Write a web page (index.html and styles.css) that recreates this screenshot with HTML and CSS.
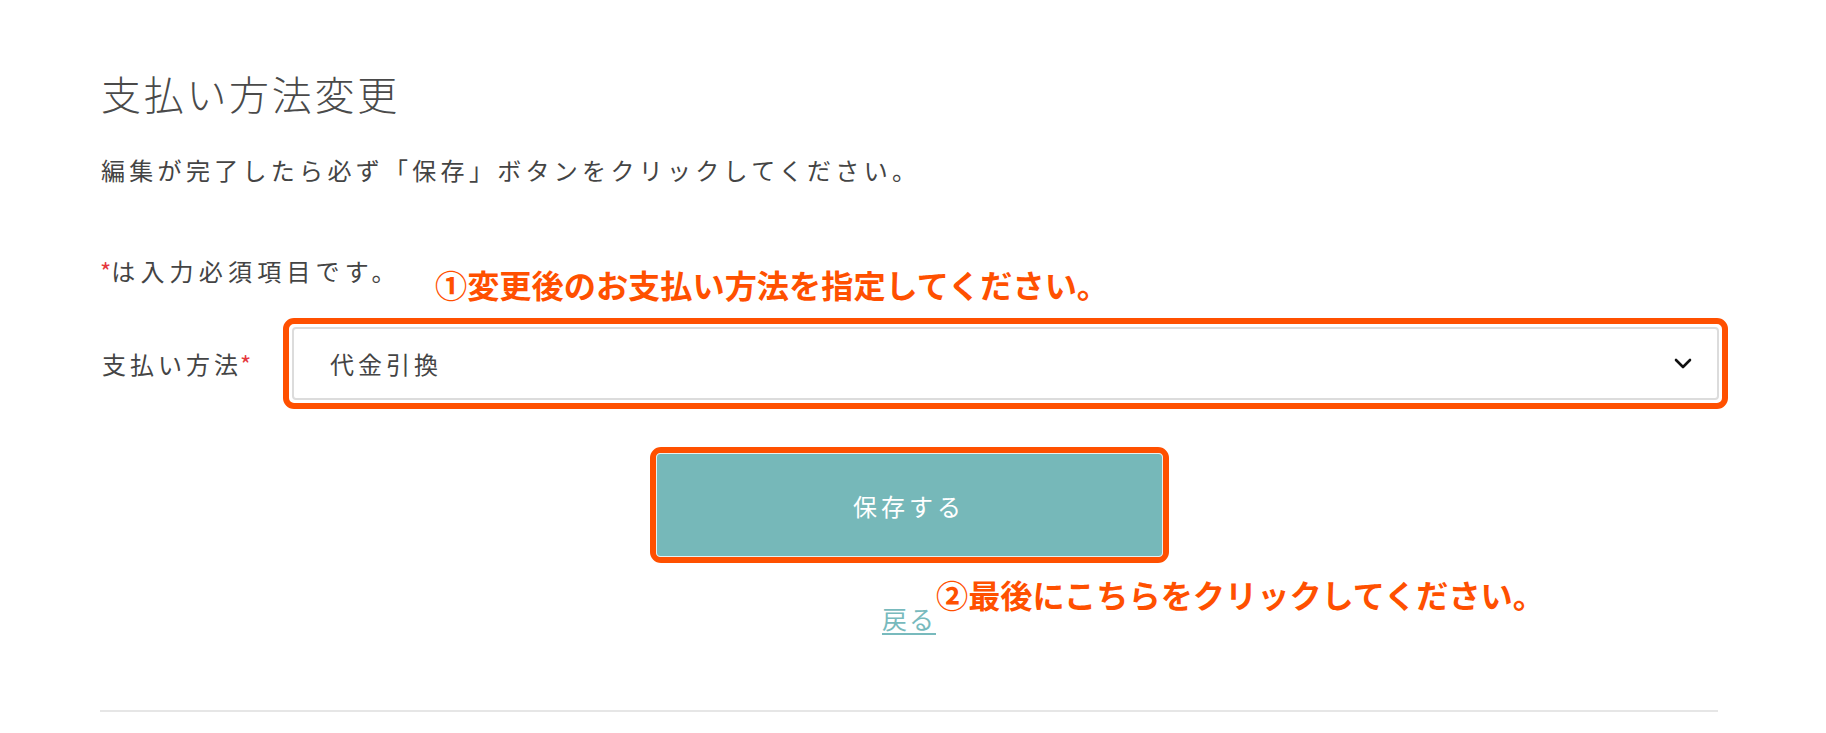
FILE: index.html
```html
<!DOCTYPE html>
<html lang="ja">
<head>
<meta charset="utf-8">
<title>支払い方法変更</title>
<link rel="stylesheet" href="styles.css">
</head>
<body>
<div class="page">
  <h1 class="title">支払い方法変更</h1>
  <p class="lead">編集が完了したら必ず「保存」ボタンをクリックしてください。</p>
  <p class="note"><span class="req">*</span>は入力必須項目です。</p>

  <div class="row">
    <label class="label">支払い方法<span class="req">*</span></label>
    <div class="mark mark-select">
      <div class="select">
        <span class="select-text">代金引換</span>
        <svg class="chev" width="18" height="11" viewBox="0 0 18 11"><path d="M2 2 L9 9 L16 2" fill="none" stroke="#111" stroke-width="2.6" stroke-linecap="round" stroke-linejoin="round"/></svg>
      </div>
    </div>
  </div>

  <div class="actions">
    <div class="mark mark-btn">
      <button class="save">保存する</button>
    </div>
    <a class="back" href="#">戻る</a>
  </div>

  <hr class="divider">

  <div class="anno anno1">①変更後のお支払い方法を指定してください。</div>
  <div class="anno anno2">②最後にこちらをクリックしてください。</div>
</div>
</body>
</html>
```

FILE: styles.css
```css
html, body {
  margin: 0;
  padding: 0;
  background: #fff;
}
body {
  font-family: "Noto Sans CJK JP", "Noto Sans", sans-serif;
  color: #444;
}
.page {
  position: relative;
  padding: 69px 108px 0 100px;
  height: 733px;
  box-sizing: border-box;
}
.title {
  margin: 0 0 0 1px;
  font-size: 40px;
  line-height: 48px;
  font-weight: 300;
  letter-spacing: 2.7px;
  color: #4a4a4a;
}
.lead {
  margin: 36px 0 0 1px;
  font-size: 24px;
  line-height: 34px;
  letter-spacing: 4.3px;
  font-weight: 400;
}
.note {
  margin: 67px 0 0 0;
  font-size: 24px;
  line-height: 34px;
  letter-spacing: 5.2px;
}
.req {
  color: #e5373d;
  letter-spacing: 0;
}
.row {
  margin-top: 30px;
  display: grid;
  grid-template-columns: 183px 1fr;
  align-items: center;
}
.label {
  font-size: 24px;
  line-height: 34px;
  letter-spacing: 4px;
  padding-left: 2px;
}
.label .req {
  margin-left: -2px;
}
.mark {
  border: 6px solid #ff5000;
  border-radius: 11px;
}
.mark-select {
  padding: 3px;
  margin-right: -10px;
}
.select {
  height: 73px;
  box-sizing: border-box;
  border: 2px solid #dcdcdc;
  border-radius: 4px;
  display: flex;
  align-items: center;
  justify-content: space-between;
  padding: 0 25px 0 36px;
  background: #fff;
}
.select-text {
  font-size: 24px;
  letter-spacing: 4px;
  color: #444;
}
.chev {
  display: block;
}
.actions {
  margin-top: 38px;
  display: flex;
  flex-direction: column;
  align-items: center;
}
.mark-btn {
  width: 519px;
  height: 116px;
  box-sizing: border-box;
  padding: 0;
}
.save {
  display: block;
  width: 100%;
  height: 100%;
  box-sizing: border-box;
  border: 1px solid #e6f1f1;
  border-radius: 4px;
  background: #76b8b9;
  color: #fff;
  font-family: inherit;
  font-size: 24px;
  letter-spacing: 4px;
  padding: 0;
}
.back {
  margin-top: 39px;
  font-size: 25px;
  line-height: 32px;
  letter-spacing: 2px;
  color: #78babd;
  text-decoration: underline;
  text-underline-offset: 4px;
  text-decoration-thickness: 2px;
}
.divider {
  margin: 76px 0 0 0;
  border: 0;
  border-top: 2px solid #e6e6e6;
}
.anno {
  position: absolute;
  font-weight: 700;
  color: #ff5000;
  font-size: 32.2px;
  line-height: 40px;
  white-space: nowrap;
}
.anno1 {
  left: 435px;
  top: 264px;
}
.anno2 {
  left: 936px;
  top: 574px;
}
```
